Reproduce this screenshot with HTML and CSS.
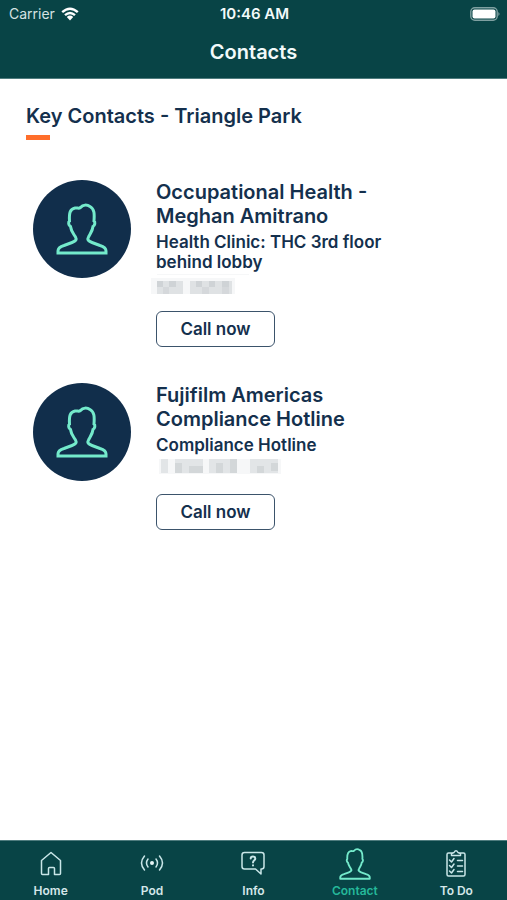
FILE: index.html
```html
<!DOCTYPE html>
<html lang="en">
<head>
<meta charset="utf-8">
<meta name="viewport" content="width=device-width, initial-scale=1">
<title>Contacts</title>
<link rel="stylesheet" href="styles.css">
</head>
<body>
<svg class="defs" aria-hidden="true">
  <symbol id="person" viewBox="0 0 52 52">
    <path d="M2 50V48C2 45 4.500 43.500 8 42.500L16 39.500C20 38 21 36.500 19.500 34C17 30 15 28 14.500 23.500C12.500 22.500 12 19 13.500 18C13 10 14 6 19 5C21.500 4.500 22.500 6 24.500 4.500C27 1.500 31 1.500 34 3.500C38.500 6 38.500 11 38 18C39.500 19 39 22.500 37 23.500C36.500 28 34.500 30 32.500 34C31 36.500 32 38 36 39.500L44 42.500C47.500 43.500 50 45 50 48V50Z"/>
  </symbol>
</svg>
<header class="top">
  <div class="status">
    <span class="carrier">Carrier
      <svg class="wifi" viewBox="0 0 18 14" aria-hidden="true"><path d="M1.200 5.200Q9-1.800 16.800 5.200M4 8.200Q9 3.800 14 8.200"/><path class="solid" d="M5.800 10Q9 7.200 12.200 10L9 13.500Z"/></svg>
    </span>
    <span class="time">10:46 AM</span>
    <svg class="battery" viewBox="0 0 30 14" aria-hidden="true"><rect class="shell" x=".8" y=".8" width="26.400" height="12.400" rx="4"/><rect class="charge" x="2.500" y="2.500" width="23" height="9" rx="2"/><path class="tip" d="M28.300 5Q30.800 7 28.300 9Z"/></svg>
  </div>
  <h1>Contacts</h1>
</header>
<main>
  <h2>Key Contacts - Triangle Park</h2>
  <article class="contact">
    <div class="avatar"><svg><use href="#person"/></svg></div>
    <div class="details">
      <h3>Occupational Health - Meghan Amitrano</h3>
      <p>Health Clinic: THC 3rd floor behind lobby</p>
      <svg class="hidden-number" viewBox="0 0 132 20" aria-hidden="true">
        <path fill="#f6f7f8" d="M0 4h84v16H0zM6 0h92v1H6z"/>
        <path fill="#dfe2e4" d="M6 7h26v13H6zM39 7h42v13H39z"/>
        <path fill="#cfd3d6" d="M6 7h6v6H6zM18 7h7v6h-7zM45 7h6v6h-6zM58 7h6v6h-6zM71 7h7v6h-7z"/>
        <path fill="#d5d8db" d="M12 13h6v7h-6zM51 13h7v7h-7zM71 13h7v7h-7z"/>
      </svg>
      <button type="button">Call now</button>
    </div>
  </article>
  <article class="contact">
    <div class="avatar"><svg><use href="#person"/></svg></div>
    <div class="details">
      <h3>Fujifilm Americas Compliance Hotline</h3>
      <p>Compliance Hotline</p>
      <svg class="hidden-number" viewBox="0 0 132 20" aria-hidden="true">
        <path fill="#f6f7f8" d="M8 2h122v15H8z"/>
        <path fill="#e2e5e7" d="M10 2h7v14h-7zM24 2h28v14H24zM58 2h28v14H58zM99 2h28v14H99z"/>
        <path fill="#d3d7d9" d="M24 6h7v10h-7zM38 9h14v7H38zM65 6h7v10h-7zM79 2h7v14h-7zM106 9h7v7h-7zM120 6h7v8h-7z"/>
      </svg>
      <button type="button">Call now</button>
    </div>
  </article>
</main>
<nav class="tabs">
  <a href="#home">
    <svg viewBox="0 0 32 32" aria-hidden="true"><path d="M6.500 12.500 16 4.500 25.500 12.500V25.500Q25.500 26.500 24.500 26.500H19.500V20.500Q19.500 19.500 18.500 19.500H14.500Q13.500 19.500 13.500 20.500V26.500H7.500Q6.500 26.500 6.500 25.500Z"/></svg>
    Home</a>
  <a href="#pod">
    <svg viewBox="0 0 32 32" aria-hidden="true"><circle class="dot" cx="16" cy="15" r="2"/><path d="M12 11Q9 15 12 19M20 11Q23 15 20 19M8.500 8Q2.500 15 8.500 22M23.500 8Q29.500 15 23.500 22"/></svg>
    Pod</a>
  <a href="#info">
    <svg viewBox="0 0 32 32" aria-hidden="true"><path d="M7.500 4.500H24.500Q27 4.500 27 7V18.500Q27 21 24.500 21H24V26L18.500 21H7.500Q5 21 5 18.500V7Q5 4.500 7.500 4.500Z"/><path class="bold" d="M13.700 10.500Q13.700 8.500 16 8.500T18.300 10.700C18.300 12.300 16 12.300 16 14.500M16 17.300V17.500"/></svg>
    Info</a>
  <a href="#contact" class="active" aria-current="page">
    <svg class="person"><use href="#person"/></svg>
    Contact</a>
  <a href="#todo">
    <svg viewBox="0 0 32 32" aria-hidden="true"><path d="M12 5H8.500Q7 5 7 6.500V26.500Q7 28 8.500 28H23.500Q25 28 25 26.500V6.500Q25 5 23.500 5H20M11.500 7.500V5.500L14 4.500Q16 1 18 4.500L20.500 5.500V7.500ZM9.500 12 11.500 14 14 10.500M9.500 17.500 11.500 19.500 14 16M9.500 23 11.500 25 14 21.500M17.500 12.500H22.500M17.500 18H22.500M17.500 23.500H22.500"/></svg>
    To Do</a>
</nav>
</body>
</html>
```
FILE: styles.css
```css
* { box-sizing: border-box; }

body {
  margin: 0;
  min-height: 100vh;
  display: flex;
  flex-direction: column;
  font-family: Inter, "Liberation Sans", sans-serif;
  font-weight: 600;
  color: #14304d;
  background: #fff;
}

h1, h2, h3, p { margin: 0; font-weight: 600; }

svg { display: block; }

.defs { position: absolute; width: 0; height: 0; }

.top {
  background: #084446;
  color: #f2fafa;
  padding-bottom: 13px;
  border-bottom: 1px solid #4f7c7e;
}

.status {
  display: grid;
  grid-template-columns: 1fr auto 1fr;
  align-items: center;
  height: 27px;
  padding: 0 7px 0 9px;
  font-size: 14px;
}

.time { font-size: 15px; }

.carrier {
  display: flex;
  align-items: center;
  gap: 6px;
  font-weight: 400;
  color: #d5e2e2;
}

.wifi { width: 18px; height: 14px; fill: none; stroke: #fff; stroke-width: 2.4; }
.wifi .solid { fill: #fff; stroke: none; }

.battery { width: 30px; height: 14px; justify-self: end; }
.shell { fill: none; stroke: #7fa0a1; stroke-width: 1.4; }
.charge { fill: #fff; }
.tip { fill: #7fa0a1; }

h1 {
  padding-top: 12px;
  font-size: 20px;
  line-height: 26px;
  text-align: center;
}

main { flex: 1; padding: 24px 26px; }

h2 { font-size: 20px; line-height: 26px; }

h2::after {
  content: "";
  display: block;
  width: 24px;
  height: 5px;
  margin-top: 6px;
  background: #ff6e2b;
}

.contact {
  display: flex;
  gap: 25px;
  margin-top: 36px;
  padding-left: 7px;
}

h2 + .contact { margin-top: 40px; }

.avatar {
  flex: none;
  display: grid;
  place-items: center;
  width: 98px;
  height: 98px;
  border-radius: 50%;
  background: #112e4b;
}

.avatar svg {
  width: 52px;
  height: 52px;
  fill: none;
  stroke: #74eacb;
  stroke-width: 3;
}

.details { max-width: 240px; }

h3 { font-size: 20px; line-height: 24px; }

p { margin-top: 4px; font-size: 17px; line-height: 20px; }

.hidden-number {
  width: 132px;
  height: 20px;
  margin: 2px 0 17px -5px;
  shape-rendering: crispEdges;
}

button {
  display: block;
  width: 119px;
  height: 36px;
  padding: 0;
  border: 1px solid #3b536b;
  border-radius: 6px;
  background: #fff;
  color: inherit;
  font: inherit;
  font-size: 17px;
}

.tabs {
  display: grid;
  grid-template-columns: repeat(5, 1fr);
  height: 60px;
  padding-top: 7px;
  background: #084446;
  border-top: 1px solid #4f7c7e;
}

.tabs a {
  display: flex;
  flex-direction: column;
  align-items: center;
  gap: 4px;
  color: #d5e7e9;
  font-size: 12px;
  line-height: 14px;
  text-decoration: none;
}

.tabs svg {
  width: 32px;
  height: 32px;
  fill: none;
  stroke: #c9e6e8;
  stroke-width: 1.5;
  stroke-linecap: round;
  stroke-linejoin: round;
}

.tabs .dot { fill: #e8f6f7; stroke: none; }
.tabs .bold { stroke-width: 2; }
.tabs .active { color: #25b89a; }
.tabs .person { stroke: #74eacb; stroke-width: 3; }
```
